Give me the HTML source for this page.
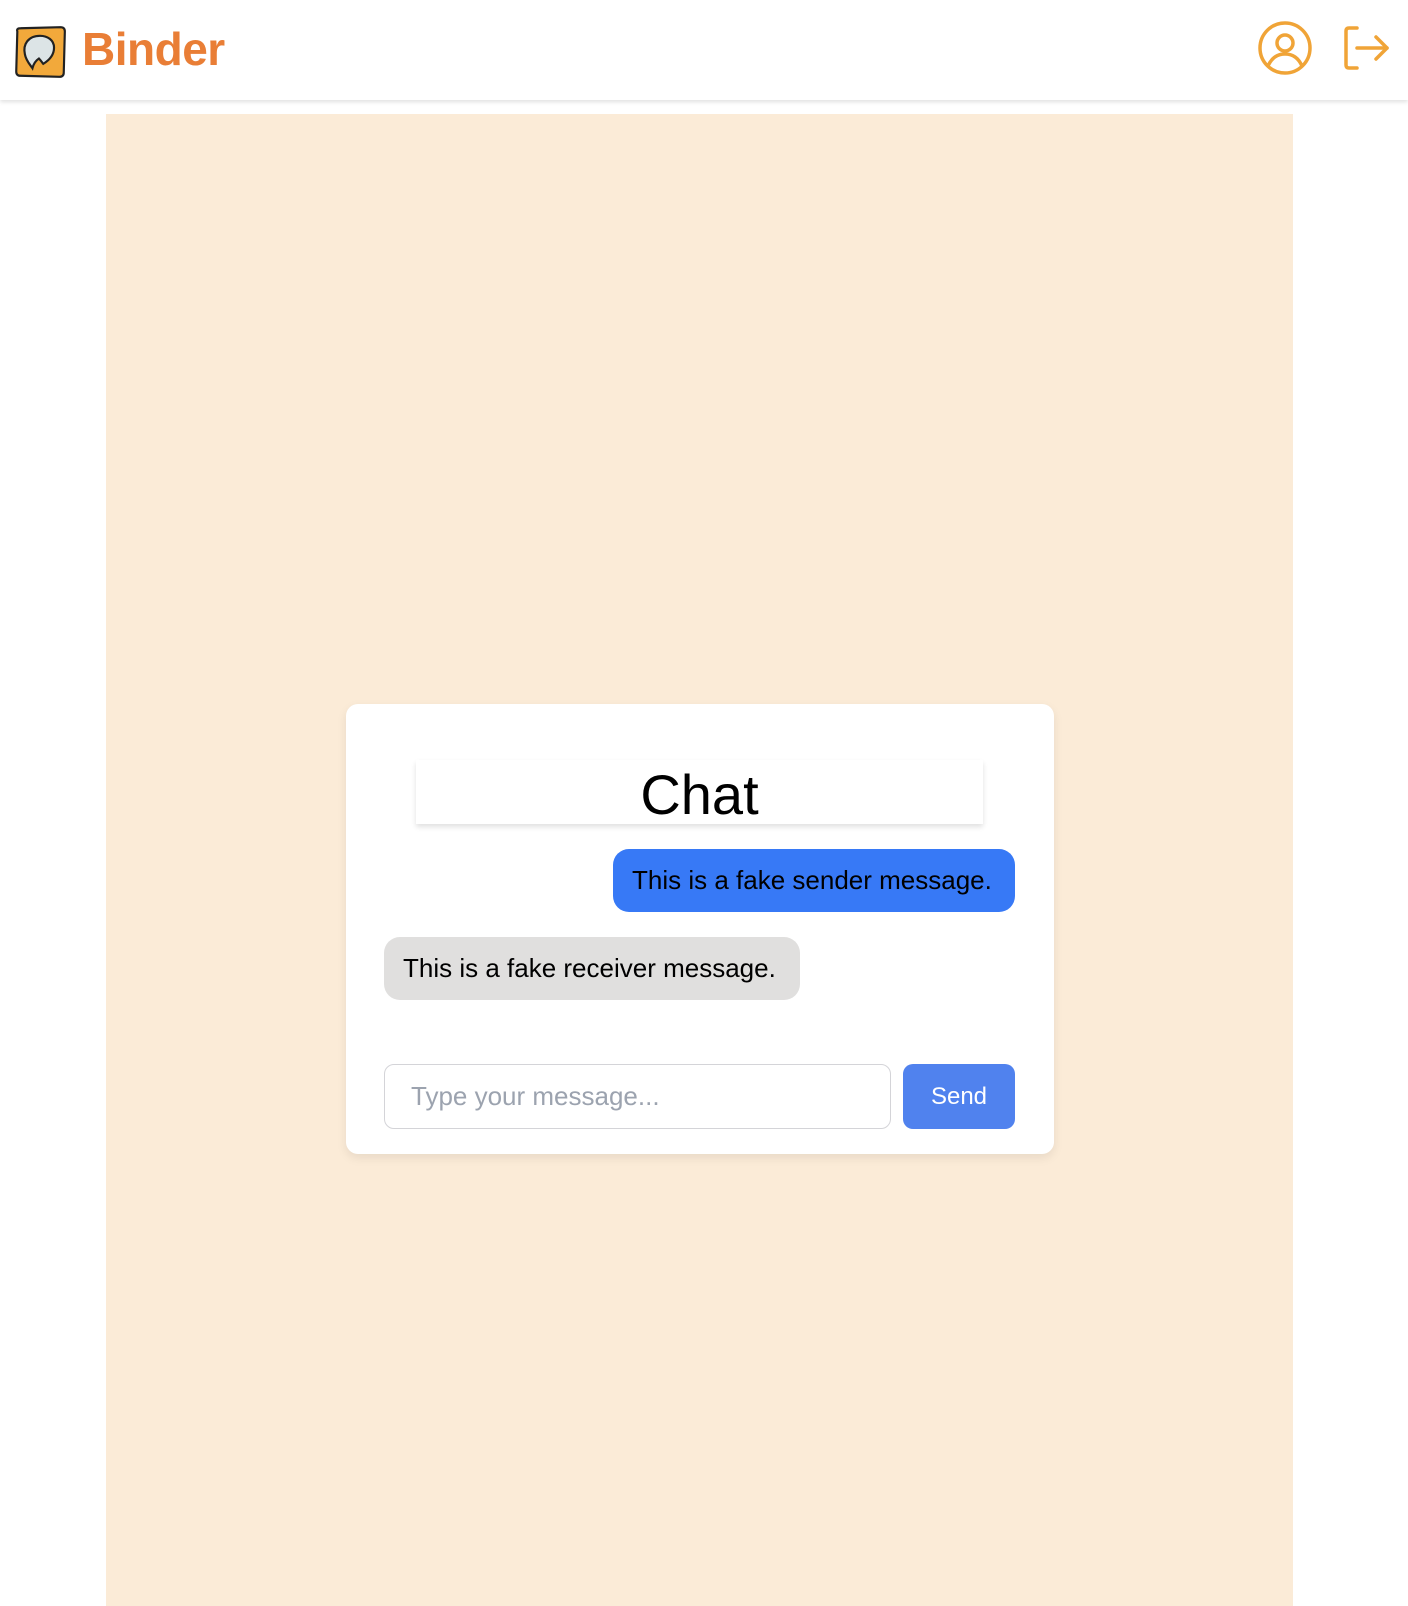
<!DOCTYPE html>
<html><head><meta charset="utf-8"><style>
html,body{margin:0;padding:0;width:1408px;height:1606px;overflow:hidden;background:#fff;font-family:"Liberation Sans",Arial,sans-serif;}
.header{position:absolute;left:0;top:0;width:1408px;height:100px;background:#fff;box-shadow:0 2px 4px rgba(0,0,0,0.12);z-index:2}
.brand{position:absolute;left:82px;top:22px;font-size:46px;font-weight:bold;color:#E97E36;letter-spacing:-0.5px}
.panel{position:absolute;left:106px;top:114px;width:1187px;height:1492px;background:#FBEBD7}
.card{position:absolute;left:346px;top:704px;width:708px;height:450px;background:#fff;border-radius:12px;box-shadow:0 4px 10px rgba(0,0,0,0.08)}
.title{position:absolute;left:70px;top:56px;width:567px;height:64px;background:#fff;box-shadow:0 3px 5px rgba(0,0,0,0.12);text-align:center;font-size:56px;line-height:70px;color:#000}
.b{position:absolute;height:63px;border-radius:16px;font-size:26px;line-height:63px;padding:0 19px;box-sizing:border-box;white-space:nowrap;color:#000}
.s{left:267px;top:145px;width:402px;background:#3779F6}
.r{left:38px;top:233px;width:416px;background:#E0DFDE}
.in{position:absolute;left:38px;top:360px;width:507px;height:65px;border:1px solid #d4d4d8;border-radius:10px;box-sizing:border-box;font-size:26px;line-height:63px;padding-left:26px;color:#9ca3af}
.send{position:absolute;left:557px;top:360px;width:112px;height:65px;border-radius:10px;background:#5082EE;color:#fff;font-size:24px;line-height:65px;text-align:center}
</style></head><body>
<div class="header">
<svg style="position:absolute;left:13px;top:25px" width="54" height="54" viewBox="0 0 50 50">
<path d="M4 6 Q3 3 7 3 L44 2 Q48 2 48 6 L47 44 Q47 48 43 48 L7 47 Q3 47 3 43 Z" fill="#F2A93B" stroke="#222" stroke-width="2"/>
<path d="M25 10 C14 10 9 18 11 27 C12 33 16 37 18 40 C19 36 21 33 24 31 C26 33 27 35 28 36 C33 33 38 28 38 21 C38 14 32 10 25 10 Z" fill="#DCE4E6" stroke="#222" stroke-width="2"/>
</svg>
<div class="brand">Binder</div>
<svg style="position:absolute;left:1256px;top:19px" width="58" height="58" viewBox="0 0 58 58" fill="none" stroke="#F0A437" stroke-width="3.5">
<circle cx="29" cy="29" r="25"/><circle cx="29" cy="24" r="8"/><path d="M12 47 C16 38 22 35 29 35 C36 35 42 38 46 47"/>
</svg>
<svg style="position:absolute;left:1343px;top:25px" width="48" height="46" viewBox="0 0 48 46" fill="none" stroke="#F0A437" stroke-width="3.5" stroke-linecap="round" stroke-linejoin="round">
<path d="M14 3 H6 Q3 3 3 6 V40 Q3 43 6 43 H14"/><path d="M14 23 H44"/><path d="M33 12 L44 23 L33 34"/>
</svg>
</div>
<div class="panel"></div>
<div class="card">
<div class="title">Chat</div>
<div class="b s">This is a fake sender message.</div>
<div class="b r">This is a fake receiver message.</div>
<div class="in">Type your message...</div>
<div class="send">Send</div>
</div>
</body></html>
